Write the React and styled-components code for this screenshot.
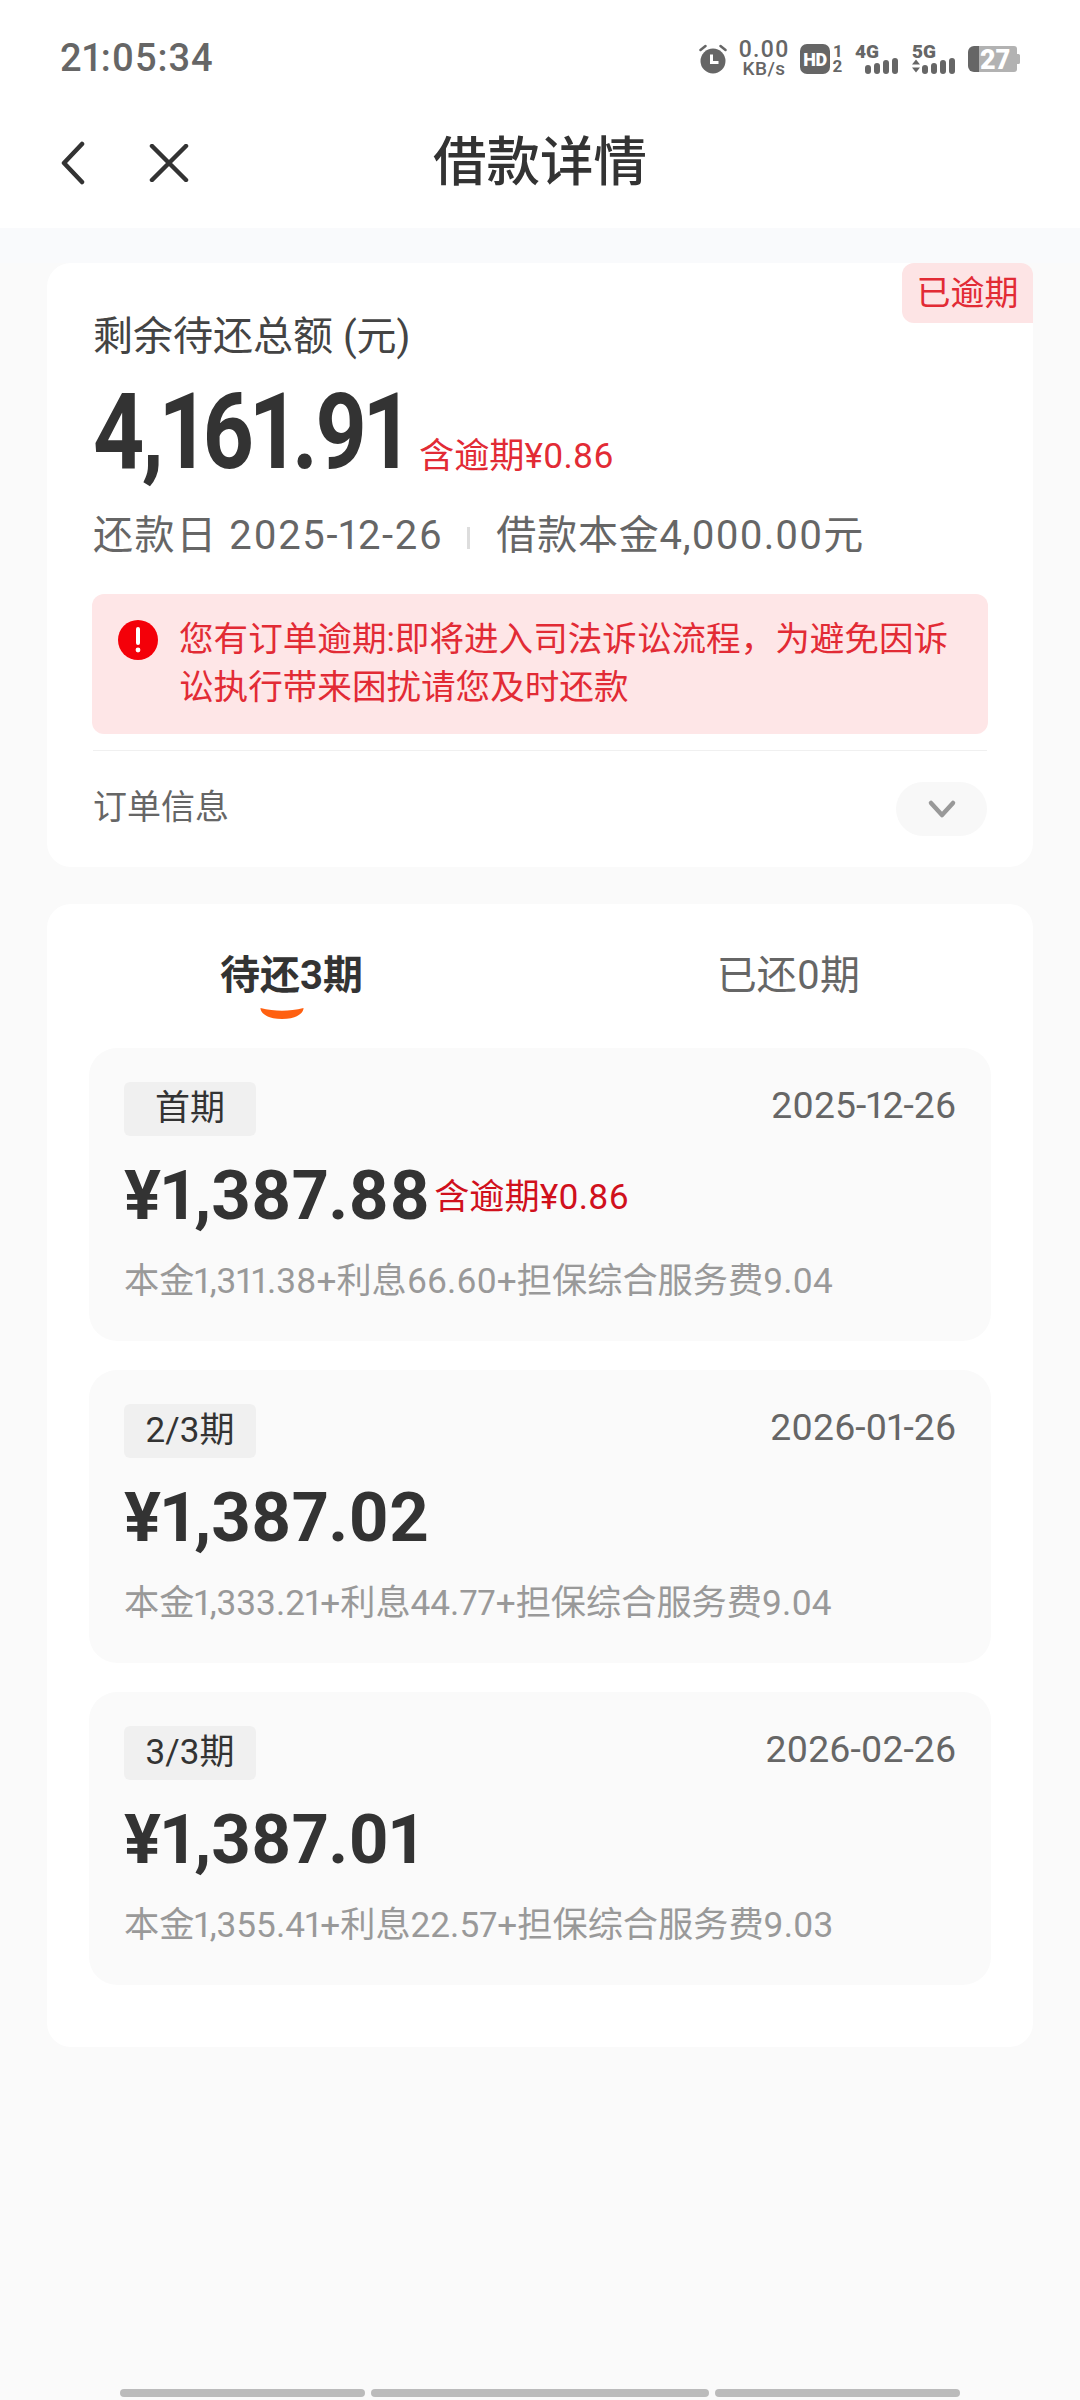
import React from "react";
import styled, { createGlobalStyle } from "styled-components";

const GlobalStyle = createGlobalStyle`
  html, body {
    margin: 0;
    padding: 0;
    background: #fafafa;
  }
  * {
    box-sizing: border-box;
  }
  body {
    font-family: Roboto, "Noto Sans CJK SC", sans-serif;
    font-variant-numeric: proportional-nums;
  }
`;

const Page = styled.div`
  width: 1080px;
  height: 2400px;
  display: flex;
  flex-direction: column;
  background: #fafafa;
  overflow: hidden;
`;

const Top = styled.div`
  background: #fff;
`;

const StatusBar = styled.div`
  height: 116px;
  padding: 0 60px;
  display: flex;
  align-items: center;
  justify-content: space-between;
`;

const Time = styled.div`
  font-size: 38px;
  font-weight: 500;
  letter-spacing: 0.9px;
  color: #666;
`;

const StatusIcons = styled.div`
  display: flex;
  align-items: center;
  color: #666;
  margin-top: 2px;
`;

const Speed = styled.div`
  width: 50px;
  margin: 0 11px 0 12px;
  display: flex;
  flex-direction: column;
  align-items: center;
  white-space: nowrap;
  font-weight: 500;
  line-height: 19px;
  span:first-child {
    font-size: 23px;
    letter-spacing: 1px;
  }
  span:last-child {
    font-size: 19px;
    letter-spacing: 0.5px;
  }
`;

const Hd = styled.div`
  width: 30px;
  height: 30px;
  border-radius: 7px;
  background: #666;
  color: #fff;
  font-size: 18px;
  font-weight: 900;
  letter-spacing: -0.5px;
  display: flex;
  align-items: center;
  justify-content: center;
`;

const Sim = styled.div`
  width: 11px;
  margin: 0 12px 0 2px;
  display: flex;
  flex-direction: column;
  align-items: center;
  font-size: 17px;
  font-weight: 700;
  line-height: 15px;
`;

const Signal = styled.div`
  position: relative;
  width: 43px;
  height: 30px;
  margin-right: ${(p) => p.$gap}px;
`;

const SignalLabel = styled.span`
  position: absolute;
  left: 0;
  top: -1px;
  font-size: 19px;
  font-weight: 900;
  line-height: 18px;
`;

const SignalBars = styled.svg`
  position: absolute;
  right: 0;
  bottom: 0;
`;

const BatteryIcon = styled.svg`
  overflow: visible;
`;

const NavBar = styled.div`
  height: 112px;
  padding: 0 60px 18px;
  display: grid;
  grid-template-columns: 1fr auto 1fr;
  align-items: center;
`;

const NavIcons = styled.div`
  display: flex;
  align-items: center;
  gap: 63px;
`;

const NavTitle = styled.div`
  font-size: 53.5px;
  font-weight: 500;
  color: #333;
  line-height: 70px;
`;

const Strip = styled.div`
  height: 35px;
  background: #f9fafc;
`;

const Content = styled.div`
  padding: 0 47px;
  display: flex;
  flex-direction: column;
  gap: 37px;
`;

const Card = styled.div`
  position: relative;
  background: #fff;
  border-radius: 24px;
`;

const SummaryCard = styled(Card)`
  height: 604px;
  padding: 50px 46px 0;
`;

const OverdueTag = styled.div`
  position: absolute;
  top: 0;
  right: 0;
  width: 131px;
  height: 60px;
  background: #fde4e5;
  border-radius: 12px 12px 0 12px;
  color: #e22b35;
  font-size: 34px;
  line-height: 60px;
  text-align: center;
`;

const TotalLabel = styled.div`
  font-size: 40px;
  line-height: 48px;
  color: #444;
`;

const TotalRow = styled.div`
  height: 120px;
  margin-top: 12px;
  display: flex;
  align-items: flex-end;
`;

const TotalValue = styled.span`
  display: inline-block;
  width: 314px;
  white-space: nowrap;
  font-size: 105px;
  font-weight: 700;
  line-height: 120px;
  letter-spacing: -3px;
  color: #333;
  transform: scaleX(0.853);
  transform-origin: left center;
`;

const TotalOverdue = styled.span`
  margin: 0 0 13px 12px;
  font-size: 35.2px;
  line-height: 48px;
  color: #e22b35;
`;

const DueRow = styled.div`
  height: 50px;
  margin-top: 18px;
  display: flex;
  align-items: center;
  font-size: 40px;
  letter-spacing: 1.6px;
  line-height: 50px;
  color: #666;
`;

const DueDivider = styled.i`
  width: 3px;
  height: 22px;
  margin: 4px 26px 0 24px;
  background: #ddd;
`;

const Principal = styled.span`
  letter-spacing: 0.8px;
`;

const Alert = styled.div`
  height: 140px;
  margin: 33px -1px 0;
  padding: 21px 26px 0;
  display: flex;
  gap: 21px;
  background: #fee6e7;
  border-radius: 12px;
`;

const AlertIcon = styled.svg`
  flex: none;
  margin-top: 5px;
`;

const AlertText = styled.div`
  font-size: 34.6px;
  line-height: 48px;
  color: #e22b35;
`;

const OrderRow = styled.div`
  margin-top: 16px;
  padding: 31px 0;
  border-top: 1px solid #f0f0f0;
  display: flex;
  align-items: center;
  justify-content: space-between;
`;

const OrderLabel = styled.div`
  font-size: 34px;
  color: #666;
  margin-top: -9px;
`;

const ChevronPill = styled.div`
  width: 91px;
  height: 54px;
  border-radius: 27px;
  background: #f8f8f8;
  display: flex;
  align-items: center;
  justify-content: center;
`;

const PlanCard = styled(Card)`
  height: 1143px;
  padding: 0 42px;
`;

const Tabs = styled.div`
  height: 144px;
  padding: 0 131px;
  display: flex;
  align-items: center;
  justify-content: space-between;
`;

const Tab = styled.div`
  position: relative;
  font-size: 40px;
  font-weight: ${(p) => (p.$active ? 700 : 400)};
  color: ${(p) => (p.$active ? "#333" : "#666")};
  margin-top: -8px;
`;

const TabMark = styled.svg`
  position: absolute;
  left: 39px;
  bottom: -18px;
`;

const Installments = styled.div`
  display: flex;
  flex-direction: column;
  gap: 29px;
`;

const Installment = styled.div`
  height: 293px;
  padding: 34px 35px 0;
  background: #fafafa;
  border-radius: 28px;
`;

const InstallmentTop = styled.div`
  display: flex;
  align-items: flex-start;
  justify-content: space-between;
`;

const Period = styled.div`
  width: 132px;
  height: 54px;
  border-radius: 6px;
  background: #f0f0f0;
  color: #333;
  font-size: 35px;
  line-height: 54px;
  text-align: center;
`;

const DueDate = styled.div`
  font-size: 37.3px;
  line-height: 47px;
  color: #666;
`;

const AmountRow = styled.div`
  height: 80px;
  margin-top: 20px;
  display: flex;
  align-items: center;
  gap: 4px;
`;

const Amount = styled.span`
  font-size: 69px;
  font-weight: 700;
  line-height: 80px;
  color: #333;
`;

const AmountOverdue = styled.span`
  margin-bottom: 5px;
  font-size: 35.2px;
  color: #d0101c;
`;

const Breakdown = styled.div`
  margin-top: 23px;
  font-size: 35.2px;
  line-height: 44px;
  color: #999;
`;

const HomeBar = styled.div`
  margin-top: auto;
  padding: 0 120px 3px;
  display: flex;
  gap: 6px;
`;

const HomeSegment = styled.div`
  flex: ${(p) => p.$grow};
  height: 8px;
  border-radius: 4px;
  background: #bbb;
`;

const installments = [
  { period: "首期", date: "2025-12-26", amount: "¥1,387.88", overdue: "含逾期¥0.86", detail: "本金1,311.38+利息66.60+担保综合服务费9.04" },
  { period: "2/3期", date: "2026-01-26", amount: "¥1,387.02", detail: "本金1,333.21+利息44.77+担保综合服务费9.04" },
  { period: "3/3期", date: "2026-02-26", amount: "¥1,387.01", detail: "本金1,355.41+利息22.57+担保综合服务费9.03" },
];

const Alarm = () => (
  <svg width="28" height="30" viewBox="0 0 28 30">
    <circle cx="14" cy="17" r="12.5" fill="#666" />
    <path d="M12.5 10.5v8h7" fill="none" stroke="#fff" strokeWidth="3" />
    <path d="M1.5 6l5-4M26.5 6l-5-4" stroke="#666" strokeWidth="2.5" strokeLinecap="round" />
  </svg>
);

const Bars = ({ arrows }) => (
  <SignalBars width={arrows ? 43 : 34} height="16" viewBox={arrows ? "0 0 43 16" : "0 0 34 16"}>
    {arrows && <path d="M0 6.5l4-5 4 5zM0 9.5l4 5 4-5z" fill="#666" />}
    {[9, 11, 14, 16].map((h, i) => (
      <rect key={i} x={(arrows ? 10 : 1) + i * 9} y={16 - h} width="6" height={h} rx="3" fill="#666" />
    ))}
  </SignalBars>
);

const Battery = () => (
  <BatteryIcon width="53" height="28" viewBox="0 0 53 28">
    <path d="M12 1h35a3 3 0 0 1 3 3v20a3 3 0 0 1-3 3H12z" fill="#b2b2b2" />
    <path d="M50 9h1.5a1.5 1.5 0 0 1 1.5 1.5v7a1.5 1.5 0 0 1-1.5 1.5H50z" fill="#b2b2b2" />
    <path d="M12 1H7a6 6 0 0 0-6 6v14a6 6 0 0 0 6 6h5z" fill="#666" />
    <text x="28" y="23.5" textAnchor="middle" fontSize="27" fontWeight="900" fill="#fff" fontFamily="Roboto, sans-serif">27</text>
  </BatteryIcon>
);

const App = () => {
  return (
    <Page>
      <GlobalStyle />
      <Top>
        <StatusBar>
          <Time>21:05:34</Time>
          <StatusIcons>
            <Alarm />
            <Speed>
              <span>0.00</span>
              <span>KB/s</span>
            </Speed>
            <Hd>HD</Hd>
            <Sim>
              <span>1</span>
              <span>2</span>
            </Sim>
            <Signal $gap={14}>
              <SignalLabel>4G</SignalLabel>
              <Bars />
            </Signal>
            <Signal $gap={12}>
              <SignalLabel>5G</SignalLabel>
              <Bars arrows />
            </Signal>
            <Battery />
          </StatusIcons>
        </StatusBar>
        <NavBar>
          <NavIcons>
            <svg width="26" height="44" viewBox="0 0 26 44">
              <path d="M22 3L4 22l18 19" fill="none" stroke="#333" strokeWidth="4.5" strokeLinecap="round" strokeLinejoin="round" />
            </svg>
            <svg width="40" height="38" viewBox="0 0 40 38">
              <path d="M3 2l34 34M37 2L3 36" fill="none" stroke="#333" strokeWidth="4.5" strokeLinecap="round" />
            </svg>
          </NavIcons>
          <NavTitle>借款详情</NavTitle>
        </NavBar>
      </Top>
      <Strip />
      <Content>
        <SummaryCard>
          <OverdueTag>已逾期</OverdueTag>
          <TotalLabel>剩余待还总额 (元)</TotalLabel>
          <TotalRow>
            <TotalValue>4,161.91</TotalValue>
            <TotalOverdue>含逾期¥0.86</TotalOverdue>
          </TotalRow>
          <DueRow>
            还款日 2025-12-26
            <DueDivider />
            <Principal>借款本金4,000.00元</Principal>
          </DueRow>
          <Alert>
            <AlertIcon width="40" height="40" viewBox="0 0 40 40">
              <circle cx="20" cy="20" r="20" fill="#f40009" />
              <path d="M20 9v14" stroke="#fff" strokeWidth="4" strokeLinecap="round" />
              <circle cx="20" cy="30" r="2.4" fill="#fff" />
            </AlertIcon>
            <AlertText>您有订单逾期:即将进入司法诉讼流程，为避免因诉讼执行带来困扰请您及时还款</AlertText>
          </Alert>
          <OrderRow>
            <OrderLabel>订单信息</OrderLabel>
            <ChevronPill>
              <svg width="30" height="20" viewBox="0 0 30 20">
                <path d="M4 4l11 12L26 4" fill="none" stroke="#999" strokeWidth="4.5" strokeLinecap="round" strokeLinejoin="round" />
              </svg>
            </ChevronPill>
          </OrderRow>
        </SummaryCard>
        <PlanCard>
          <Tabs>
            <Tab $active>
              待还3期
              <TabMark width="46" height="11" viewBox="0 0 47 12">
                <path d="M0 0c8 2 16 3 23.5 3S39 2 47 0c0 6-8 12-23.5 12S0 6 0 0z" fill="#ff6010" />
              </TabMark>
            </Tab>
            <Tab>已还0期</Tab>
          </Tabs>
          <Installments>
            {installments.map((item) => (
              <Installment key={item.period}>
                <InstallmentTop>
                  <Period>{item.period}</Period>
                  <DueDate>{item.date}</DueDate>
                </InstallmentTop>
                <AmountRow>
                  <Amount>{item.amount}</Amount>
                  {item.overdue && <AmountOverdue>{item.overdue}</AmountOverdue>}
                </AmountRow>
                <Breakdown>{item.detail}</Breakdown>
              </Installment>
            ))}
          </Installments>
        </PlanCard>
      </Content>
      <HomeBar>
        <HomeSegment $grow={245} />
        <HomeSegment $grow={337} />
        <HomeSegment $grow={245} />
      </HomeBar>
    </Page>
  );
};

export default App;
